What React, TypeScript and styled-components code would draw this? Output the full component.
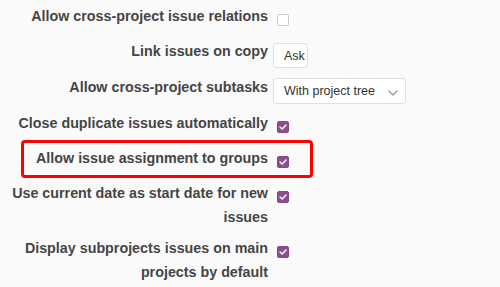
import React from 'react';
import styled, { createGlobalStyle, css } from 'styled-components';

const GlobalStyle = createGlobalStyle`
  html, body {
    margin: 0;
    padding: 0;
    background: #fafafa;
  }
  body {
    font-family: "Liberation Sans", Arial, sans-serif;
    color: #454545;
  }
`

const StyledForm = styled.div`
  width: 500px;
  height: 287px;
  box-sizing: border-box;
  padding: 4px 0 0 6px;
  overflow: hidden;
`

const StyledRow = styled.div`
  position: relative;
  display: flex;
  align-items: flex-start;
  min-height: 28px;
  margin-bottom: 7px;
`

const StyledLabel = styled.label`
  flex: 0 0 262px;
  width: 262px;
  text-align: right;
  font-size: 14.3px;
  font-weight: bold;
  line-height: 24px;
  color: #454545;
`

const StyledControl = styled.div`
  display: flex;
  margin-left: 5px;
`

const StyledCheckbox = styled.span<{ $checked?: boolean }>`
  display: flex;
  align-items: center;
  justify-content: center;
  box-sizing: border-box;
  width: 12px;
  height: 12px;
  margin: 10px 0 0 4px;
  border-radius: 2px;
  ${({ $checked }) => $checked
    ? css`
      background: #8d4e8d;
      border: 1px solid #844884;
    `
    : css`
      background: #fff;
      border: 1px solid #c9c9c9;
    `}
`

const boxBaseStyle = () => css`
  display: flex;
  align-items: center;
  box-sizing: border-box;
  background: #fff;
  border: 1px solid #e0e0e0;
  border-radius: 3px;
  padding-left: 10px;
  font-size: 12.5px;
  color: #333;
`

const StyledInputBox = styled.div`
  ${boxBaseStyle}
  width: 35px;
  height: 25px;
  margin-top: 4px;
`

const StyledSelect = styled.div`
  ${boxBaseStyle}
  position: relative;
  width: 133px;
  height: 26px;
  margin-top: 3px;

  svg {
    position: absolute;
    right: 7px;
    top: 11px;
  }
`

const StyledHighlight = styled.div`
  position: absolute;
  left: 15px;
  top: -6px;
  width: 292px;
  height: 38px;
  box-sizing: border-box;
  border: 3px solid #ff0000;
  border-radius: 4px;
  pointer-events: none;
`

const Checkbox: React.FC<{ checked?: boolean }> = ({ checked }) => (
  <StyledCheckbox $checked={checked}>
    {checked && (
      <svg width="8" height="6" viewBox="0 0 8 6">
        <path d="M1 3 L3.2 5 L7 1" fill="none" stroke="#fff" strokeWidth="1.4" strokeLinecap="round" strokeLinejoin="round" />
      </svg>
    )}
  </StyledCheckbox>
);

interface RowProps {
  label: string;
  highlighted?: boolean;
  children: React.ReactNode;
}

const Row: React.FC<RowProps> = ({ label, highlighted, children }) => (
  <StyledRow>
    <StyledLabel>{label}</StyledLabel>
    <StyledControl>{children}</StyledControl>
    {highlighted && <StyledHighlight />}
  </StyledRow>
);

const App: React.FC = () => {
  return (
    <>
      <GlobalStyle />
      <StyledForm>
        <Row label="Allow cross-project issue relations">
          <Checkbox />
        </Row>
        <Row label="Link issues on copy">
          <StyledInputBox>Ask</StyledInputBox>
        </Row>
        <Row label="Allow cross-project subtasks">
          <StyledSelect>
            With project tree
            <svg width="10" height="6" viewBox="0 0 10 6">
              <path d="M1 1 L5 5 L9 1" fill="none" stroke="#a0a0a0" strokeWidth="1.5" strokeLinecap="round" strokeLinejoin="round" />
            </svg>
          </StyledSelect>
        </Row>
        <Row label="Close duplicate issues automatically">
          <Checkbox checked />
        </Row>
        <Row label="Allow issue assignment to groups" highlighted>
          <Checkbox checked />
        </Row>
        <Row label="Use current date as start date for new issues">
          <Checkbox checked />
        </Row>
        <Row label="Display subprojects issues on main projects by default">
          <Checkbox checked />
        </Row>
      </StyledForm>
    </>
  );
}

export default App;
